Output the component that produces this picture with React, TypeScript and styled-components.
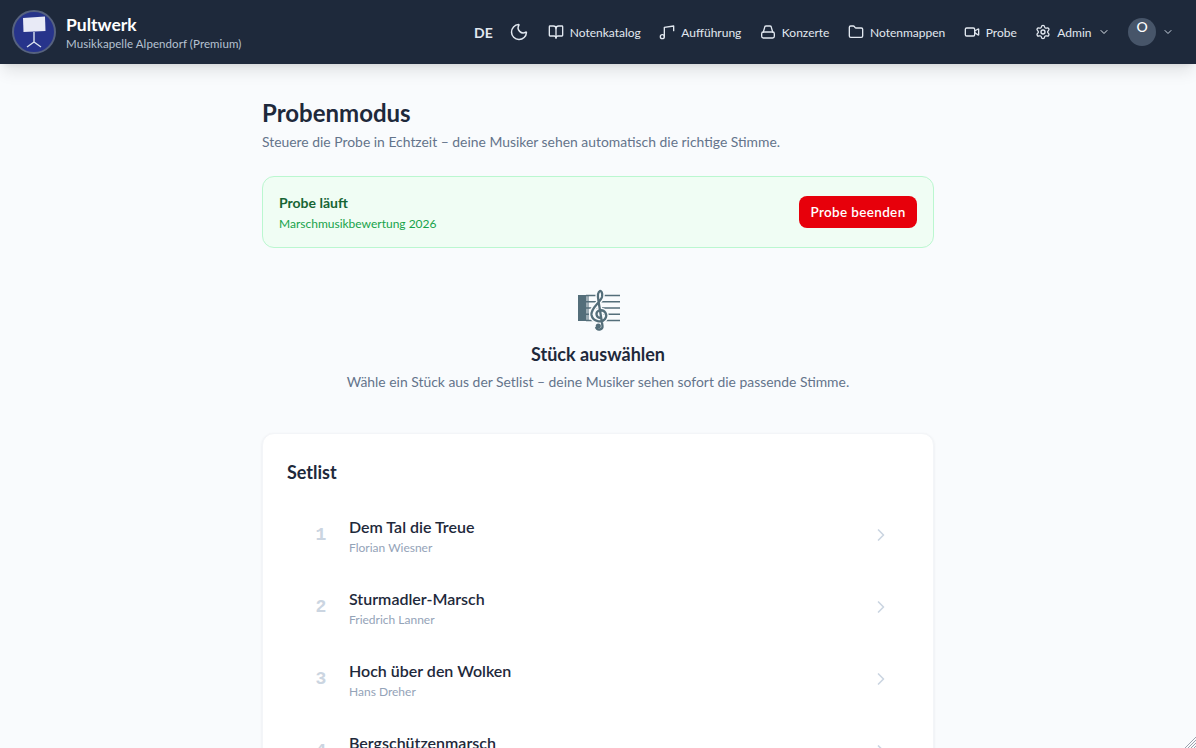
import React from 'react'
import styled, { createGlobalStyle } from 'styled-components'
import { BookOpen, ChevronDown, ChevronRight, Folder, Moon, Settings, Video } from 'lucide-react'

const pageBg = '#f9fbfd'

const Global = createGlobalStyle`
  html, body {
    margin: 0;
    height: 748px;
    overflow: hidden;
    background: ${pageBg};
    font-family: 'Lato', 'Inter', sans-serif;
    color: #1e293b;
  }
  * { box-sizing: border-box; }
`

const Header = styled.header`
  height: 64px;
  background: #1e293b;
  box-shadow: 0 10px 15px -3px rgba(0, 0, 0, 0.1), 0 4px 6px -4px rgba(0, 0, 0, 0.1);
  display: flex;
  align-items: center;
  justify-content: space-between;
  padding: 0 22px 0 12px;
  color: #fff;
  position: relative;
`

const Brand = styled.div`
  display: flex;
  align-items: center;
  gap: 10px;
`

const Logo = styled.svg`
  width: 44px;
  height: 44px;
  display: block;
`

const BrandName = styled.div`
  font-size: 17.5px;
  font-weight: 700;
  line-height: 24px;
`

const BrandSub = styled.div`
  font-size: 11.5px;
  line-height: 14px;
  color: #b6c2d2;
  letter-spacing: 0.08px;
`

const Nav = styled.nav`
  display: flex;
  align-items: center;
`

const Lang = styled.span`
  font-size: 14px;
  font-weight: 700;
  color: #e2e8f0;
  margin-right: 16px;
`

const MoonWrap = styled.span`
  display: flex;
  color: #e2e8f0;
  margin-right: 19px;
`

const NavItem = styled.a`
  display: flex;
  align-items: center;
  gap: 6px;
  font-size: 12px;
  color: #e2e8f0;
  margin-right: 18.5px;
  white-space: nowrap;
`

const Avatar = styled.div`
  width: 28px;
  height: 28px;
  border-radius: 50%;
  background: #475569;
  color: #fff;
  font-size: 14px;
  font-weight: 500;
  line-height: 17px;
  text-align: center;
  margin-right: 6px;
`

const UserMenu = styled.div`
  display: flex;
  align-items: center;
  color: #cbd5e1;
`

const Main = styled.main`
  width: 672px;
  margin: 0 auto;
  padding-top: 34px;
`

const Title = styled.h1`
  margin: 0;
  font-size: 24px;
  line-height: 30px;
  font-weight: 700;
`

const Lead = styled.p`
  margin: 4px 0 0;
  font-size: 13.9px;
  line-height: 20px;
  color: #64748b;
`

const Status = styled.div`
  margin-top: 24px;
  height: 72px;
  background: #f0fdf4;
  border: 1px solid #bbf7d0;
  border-radius: 12px;
  padding: 0 16px 1px;
  display: flex;
  align-items: center;
  justify-content: space-between;
`

const StatusText = styled.div`
  padding-top: 3px;
`

const StatusTitle = styled.div`
  font-size: 14px;
  font-weight: 700;
  line-height: 20px;
  color: #166534;
`

const StatusSub = styled.div`
  margin-top: 2px;
  font-size: 12px;
  line-height: 18px;
  color: #16a34a;
`

const StopButton = styled.button`
  width: 118px;
  height: 32px;
  background: #e7000b;
  color: #fff;
  border: 0;
  border-radius: 8px;
  font: 600 13.5px 'Lato', sans-serif;
  letter-spacing: 0.35px;
`

const Empty = styled.section`
  margin-top: 40px;
  text-align: center;
`

const ClefIcon = styled.svg`
  width: 44px;
  height: 44px;
  display: block;
  margin: 0 auto;
`

const EmptyTitle = styled.h2`
  margin: 9px 0 0;
  font-size: 18px;
  line-height: 26px;
  font-weight: 700;
`

const EmptyText = styled.p`
  margin: 5px 0 0;
  font-size: 13.9px;
  line-height: 20px;
  color: #64748b;
`

const Card = styled.section`
  margin-top: 41px;
  background: #fff;
  border: 1px solid #f3f5f8;
  border-radius: 12px;
  box-shadow: 0 1px 3px rgba(15, 23, 42, 0.08);
  padding: 24px;
`

const CardTitle = styled.h3`
  margin: 0 0 13px;
  font-size: 18px;
  line-height: 28px;
  font-weight: 700;
`

const Row = styled.div`
  height: 72px;
  display: flex;
  align-items: center;
  padding: 0 18px 0 24px;
`

const Num = styled.span`
  width: 20px;
  text-align: center;
  font: 700 18px 'Liberation Mono', monospace;
  color: #cbd5e1;
  margin-right: 18px;
`

const PieceInfo = styled.div`
  flex: 1;
`

const PieceName = styled.div`
  font-size: 16px;
  font-weight: 600;
  line-height: 24px;
`

const Composer = styled.div`
  margin-top: 1px;
  font-size: 12px;
  line-height: 16px;
  color: #94a3b8;
`

const Grip = styled.svg`
  position: fixed;
  right: 0;
  bottom: 0;
  width: 14px;
  height: 14px;
`

const pieces = [
  ['Dem Tal die Treue', 'Florian Wiesner'],
  ['Sturmadler-Marsch', 'Friedrich Lanner'],
  ['Hoch über den Wolken', 'Hans Dreher'],
  ['Bergschützenmarsch', 'Josef Hofer'],
]

const clefPath =
  'M24.5 30C20 30 19 24 23 22.5C29 21 32 27 29 31C26 35 17 34 15.5 27C14.5 20 24 15 26 9C27 5 25 2.5 24 3C22 4 21.5 8 22.5 13L26.5 38C27 42 21 43 20 39'

const NoteIcon = () => (
  <svg width="16" height="16" viewBox="0 0 24 24" fill="none" stroke="currentColor" strokeWidth="2" strokeLinecap="round" strokeLinejoin="round">
    <circle cx="5" cy="19" r="3" />
    <path d="M8 19V5l14-2v7" />
  </svg>
)

const VenueIcon = () => (
  <svg width="16" height="16" viewBox="0 0 24 24" fill="none" stroke="currentColor" strokeWidth="2" strokeLinecap="round" strokeLinejoin="round">
    <path d="M5 12l2-7a2 2 0 0 1 2-2h6a2 2 0 0 1 2 2l2 7" />
    <rect x="2.5" y="12" width="19" height="9" rx="2.5" />
  </svg>
)

export default function App() {
  return (
    <>
      <Global />
      <Header>
        <Brand>
          <Logo viewBox="0 0 44 44">
            <circle cx="22" cy="22" r="21" fill="#27348b" stroke="#56627f" strokeWidth="2" />
            <path d="M11 8L33 6.5L33.5 21L11.5 22Z" fill="#e8eaf6" />
            <path d="M22 22v10M22 32l-7 5M22 32l7 5" stroke="#dbe3ee" strokeWidth="1.4" fill="none" />
          </Logo>
          <div>
            <BrandName>Pultwerk</BrandName>
            <BrandSub>Musikkapelle Alpendorf (Premium)</BrandSub>
          </div>
        </Brand>
        <Nav>
          <Lang>DE</Lang>
          <MoonWrap><Moon size={20} strokeWidth={1.75} /></MoonWrap>
          <NavItem><BookOpen size={16} />Notenkatalog</NavItem>
          <NavItem><NoteIcon />Aufführung</NavItem>
          <NavItem><VenueIcon />Konzerte</NavItem>
          <NavItem><Folder size={16} />Notenmappen</NavItem>
          <NavItem><Video size={16} />Probe</NavItem>
          <NavItem><Settings size={16} />Admin<ChevronDown size={12} /></NavItem>
          <UserMenu>
            <Avatar>O</Avatar>
            <ChevronDown size={12} />
          </UserMenu>
        </Nav>
      </Header>
      <Main>
        <Title>Probenmodus</Title>
        <Lead>Steuere die Probe in Echtzeit – deine Musiker sehen automatisch die richtige Stimme.</Lead>
        <Status>
          <StatusText>
            <StatusTitle>Probe läuft</StatusTitle>
            <StatusSub>Marschmusikbewertung 2026</StatusSub>
          </StatusText>
          <StopButton>Probe beenden</StopButton>
        </Status>
        <Empty>
          <ClefIcon viewBox="0 0 44 44">
            <rect x="2" y="7" width="8" height="26" fill="#546e7a" />
            <rect x="10" y="7" width="3" height="26" fill="#546e7a" opacity="0.55" />
            <path d="M10 7.5h34M10 13.7h34M10 20h34M10 26.3h34M10 32.5h34" stroke="#546e7a" strokeWidth="1.4" />
            <path d={clefPath} fill="none" stroke={pageBg} strokeWidth="5" />
            <path d={clefPath} fill="none" stroke="#546e7a" strokeWidth="2.3" />
            <circle cx="22.3" cy="38" r="2.6" fill="#546e7a" />
          </ClefIcon>
          <EmptyTitle>Stück auswählen</EmptyTitle>
          <EmptyText>Wähle ein Stück aus der Setlist – deine Musiker sehen sofort die passende Stimme.</EmptyText>
        </Empty>
        <Card>
          <CardTitle>Setlist</CardTitle>
          {pieces.map(([name, composer], i) => (
            <Row key={name}>
              <Num>{i + 1}</Num>
              <PieceInfo>
                <PieceName>{name}</PieceName>
                <Composer>{composer}</Composer>
              </PieceInfo>
              <ChevronRight size={20} color="#cbd5e1" />
            </Row>
          ))}
        </Card>
      </Main>
      <Grip viewBox="0 0 14 14">
        <path d="M14 3L3 14M14 6L6 14M14 9L9 14M14 12L12 14" stroke="#9ca3af" strokeWidth="1" />
      </Grip>
    </>
  )
}
